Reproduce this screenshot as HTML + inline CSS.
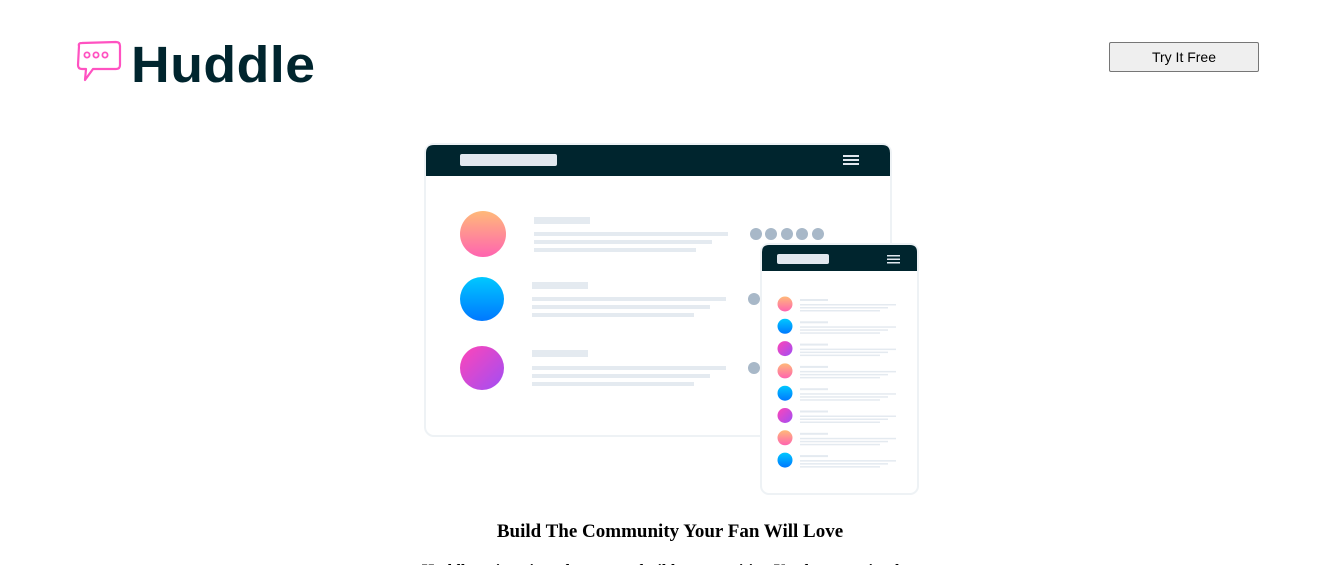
<!DOCTYPE html>
<html><head><meta charset="utf-8"><style>
html,body{margin:0;padding:0;background:#fff;width:1340px;height:565px;overflow:hidden;position:relative}
.logo{position:absolute;left:75px;top:38px}
.brand{position:absolute;left:131px;top:35px;font:bold 51px "Liberation Sans",sans-serif;color:#00252E;letter-spacing:0.5px;transform-origin:0 0;transform:scaleX(1.05)}
button{position:absolute;left:1109px;top:42px;width:150px;height:30px;background:#EFEFEF;border:1px solid #767676;border-radius:2px;font:14px "Liberation Sans",sans-serif;color:#000;padding:0}
h1{position:absolute;left:0;width:1340px;top:521px;margin:0;text-align:center;font:bold 19px "Liberation Serif",serif;color:#000}
p{position:absolute;left:415px;width:510px;top:562px;margin:0;text-align:center;font:bold 16px "Liberation Serif",serif;color:#000;height:3px;overflow:hidden}
svg.ill{position:absolute;left:0;top:0}
</style></head><body>
<svg class="logo" width="48" height="46" viewBox="0 0 48 46">
<path d="M4 8 Q3 5 7 5 L41 4 Q45 4 45 8 L45 27 Q45 31 41 31 L18 31 L10 42 L11 31 L7 31 Q3 31 3 27 Z" fill="none" stroke="#FF52C1" stroke-width="2.2" stroke-linejoin="round"/>
<circle cx="12" cy="17" r="2.6" fill="none" stroke="#FF52C1" stroke-width="1.8"/>
<circle cx="21" cy="17" r="2.6" fill="none" stroke="#FF52C1" stroke-width="1.8"/>
<circle cx="30" cy="17" r="2.6" fill="none" stroke="#FF52C1" stroke-width="1.8"/>
</svg>
<div class="brand">Huddle</div>
<button>Try It Free</button>
<svg class="ill" width="1340" height="565">
<defs>
<linearGradient id="g1" x1="0" y1="0" x2="0" y2="1"><stop offset="0" stop-color="#FFB979"/><stop offset="1" stop-color="#FF64B0"/></linearGradient>
<linearGradient id="g2" x1="0" y1="0" x2="0" y2="1"><stop offset="0" stop-color="#00C8FF"/><stop offset="1" stop-color="#0078FF"/></linearGradient>
<linearGradient id="g3" x1="0" y1="0" x2="1" y2="1"><stop offset="0" stop-color="#FF45B7"/><stop offset="1" stop-color="#A04EF5"/></linearGradient>
</defs>
<rect x="425" y="144" width="466" height="292" rx="9" fill="#fff" stroke="#EEF2F5" stroke-width="2"/>
<path d="M426 176 L426 153 Q426 145 434 145 L882 145 Q890 145 890 153 L890 176 Z" fill="#00252E"/>
<rect x="460" y="154" width="97" height="12" rx="2" fill="#E1E8EF"/>
<g fill="#E1E8EF"><rect x="843" y="155" width="16" height="2"/><rect x="843" y="159" width="16" height="2"/><rect x="843" y="163" width="16" height="2"/></g>
<circle cx="483" cy="234" r="23" fill="url(#g1)"/>
<circle cx="482" cy="299" r="22" fill="url(#g2)"/>
<circle cx="482" cy="368" r="22" fill="url(#g3)"/>
<g fill="#E4EAF0">
<rect x="534" y="217" width="56" height="7"/><rect x="534" y="232" width="194" height="4"/><rect x="534" y="240" width="178" height="4"/><rect x="534" y="248" width="162" height="4"/>
<rect x="532" y="282" width="56" height="7"/><rect x="532" y="297" width="194" height="4"/><rect x="532" y="305" width="178" height="4"/><rect x="532" y="313" width="162" height="4"/>
<rect x="532" y="350" width="56" height="7"/><rect x="532" y="366" width="194" height="4"/><rect x="532" y="374" width="178" height="4"/><rect x="532" y="382" width="162" height="4"/>
</g>
<g fill="#A8B8C8"><circle cx="756" cy="234" r="6"/><circle cx="771" cy="234" r="6"/><circle cx="787" cy="234" r="6"/><circle cx="802" cy="234" r="6"/><circle cx="818" cy="234" r="6"/><circle cx="754" cy="299" r="6"/><circle cx="754" cy="368" r="6"/></g>
<rect x="761" y="244" width="157" height="250" rx="8" fill="#fff" stroke="#EEF2F5" stroke-width="2"/>
<path d="M762 271 L762 252 Q762 245 769 245 L910 245 Q917 245 917 252 L917 271 Z" fill="#00252E"/>
<rect x="777" y="254" width="52" height="10" rx="2" fill="#E1E8EF"/>
<g fill="#E1E8EF"><rect x="887" y="255" width="13" height="1.5"/><rect x="887" y="258.5" width="13" height="1.5"/><rect x="887" y="262" width="13" height="1.5"/></g>
<g>
<circle cx="785" cy="304" r="7.5" fill="url(#g1)"/>
<rect x="800" y="299" width="28" height="2" fill="#E4EAF0"/><rect x="800" y="304" width="96" height="1.5" fill="#E4EAF0"/><rect x="800" y="307" width="88" height="1.5" fill="#E4EAF0"/><rect x="800" y="310" width="80" height="1.5" fill="#E4EAF0"/>
</g>
<g transform="translate(0,22.3)"><circle cx="785" cy="304" r="7.5" fill="url(#g2)"/><rect x="800" y="299" width="28" height="2" fill="#E4EAF0"/><rect x="800" y="304" width="96" height="1.5" fill="#E4EAF0"/><rect x="800" y="307" width="88" height="1.5" fill="#E4EAF0"/><rect x="800" y="310" width="80" height="1.5" fill="#E4EAF0"/></g>
<g transform="translate(0,44.6)"><circle cx="785" cy="304" r="7.5" fill="url(#g3)"/><rect x="800" y="299" width="28" height="2" fill="#E4EAF0"/><rect x="800" y="304" width="96" height="1.5" fill="#E4EAF0"/><rect x="800" y="307" width="88" height="1.5" fill="#E4EAF0"/><rect x="800" y="310" width="80" height="1.5" fill="#E4EAF0"/></g>
<g transform="translate(0,66.9)"><circle cx="785" cy="304" r="7.5" fill="url(#g1)"/><rect x="800" y="299" width="28" height="2" fill="#E4EAF0"/><rect x="800" y="304" width="96" height="1.5" fill="#E4EAF0"/><rect x="800" y="307" width="88" height="1.5" fill="#E4EAF0"/><rect x="800" y="310" width="80" height="1.5" fill="#E4EAF0"/></g>
<g transform="translate(0,89.2)"><circle cx="785" cy="304" r="7.5" fill="url(#g2)"/><rect x="800" y="299" width="28" height="2" fill="#E4EAF0"/><rect x="800" y="304" width="96" height="1.5" fill="#E4EAF0"/><rect x="800" y="307" width="88" height="1.5" fill="#E4EAF0"/><rect x="800" y="310" width="80" height="1.5" fill="#E4EAF0"/></g>
<g transform="translate(0,111.5)"><circle cx="785" cy="304" r="7.5" fill="url(#g3)"/><rect x="800" y="299" width="28" height="2" fill="#E4EAF0"/><rect x="800" y="304" width="96" height="1.5" fill="#E4EAF0"/><rect x="800" y="307" width="88" height="1.5" fill="#E4EAF0"/><rect x="800" y="310" width="80" height="1.5" fill="#E4EAF0"/></g>
<g transform="translate(0,133.8)"><circle cx="785" cy="304" r="7.5" fill="url(#g1)"/><rect x="800" y="299" width="28" height="2" fill="#E4EAF0"/><rect x="800" y="304" width="96" height="1.5" fill="#E4EAF0"/><rect x="800" y="307" width="88" height="1.5" fill="#E4EAF0"/><rect x="800" y="310" width="80" height="1.5" fill="#E4EAF0"/></g>
<g transform="translate(0,156.1)"><circle cx="785" cy="304" r="7.5" fill="url(#g2)"/><rect x="800" y="299" width="28" height="2" fill="#E4EAF0"/><rect x="800" y="304" width="96" height="1.5" fill="#E4EAF0"/><rect x="800" y="307" width="88" height="1.5" fill="#E4EAF0"/><rect x="800" y="310" width="80" height="1.5" fill="#E4EAF0"/></g>
</svg>
<h1>Build The Community Your Fan Will Love</h1>
<p>Huddle re-imagines the way we build communities. You have a voice, but so does your audience.</p>
</body></html>
